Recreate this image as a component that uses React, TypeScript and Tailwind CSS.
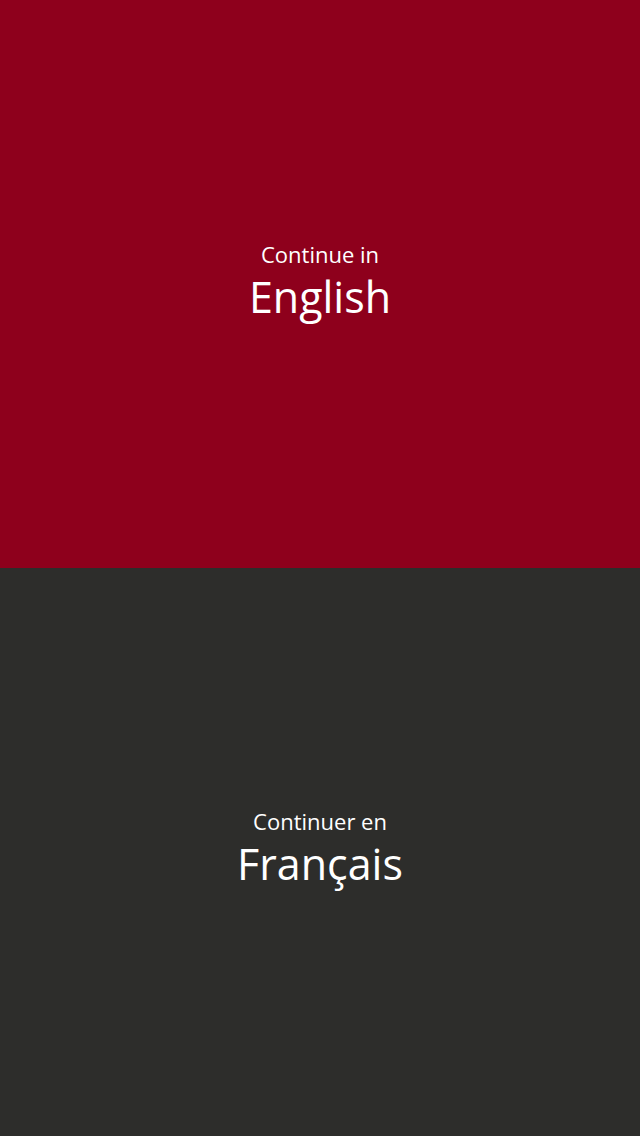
import React from "react";

export default function App() {
  return (
    <div className="flex h-[1136px] w-[640px] flex-col text-white" style={{ fontFamily: '"Open Sans", "Noto Sans", sans-serif' }}>
      <div className="flex h-[568px] flex-col items-center justify-center bg-[#8e001c] pb-[6px]">
        <div className="mb-[6px] text-[22px] leading-[26px]">Continue in</div>
        <div className="text-[43px] leading-[48px]">English</div>
      </div>
      <div className="flex h-[568px] flex-col items-center justify-center bg-[#2d2d2b] pb-[8px]">
        <div className="mb-[6px] text-[22px] leading-[26px]">Continuer en</div>
        <div className="text-[43px] leading-[48px]">Français</div>
      </div>
    </div>
  );
}
